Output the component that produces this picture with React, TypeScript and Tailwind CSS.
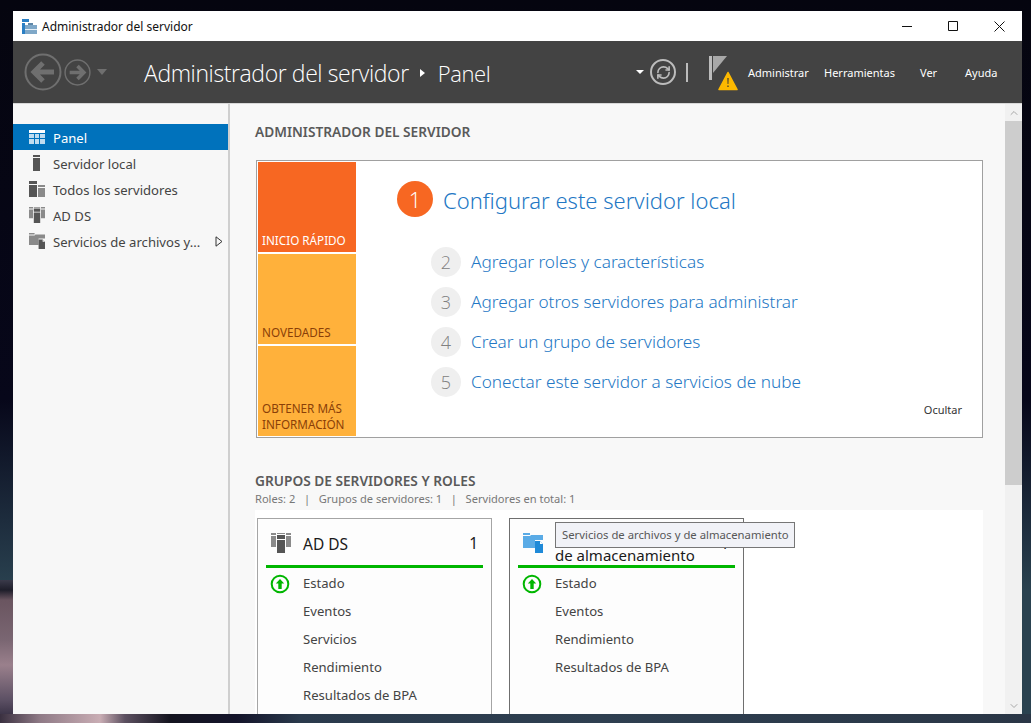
import { RefreshCw, ChevronUp, ChevronDown } from 'lucide-react';

const uiFont = "font-['Noto_Sans',sans-serif]";

function NavArrow({ size, flip }: { size: number; flip?: boolean }) {
  return (
    <svg width={size} height={size} viewBox="0 0 38 38" className={flip ? 'rotate-180' : ''}>
      <circle cx="19" cy="19" r="17.5" fill="none" stroke="#6f6f6f" strokeWidth="2" />
      <path d="M30 19H11M19 10l-9 9 9 9" fill="none" stroke="#6f6f6f" strokeWidth="5" />
    </svg>
  );
}

function PanelIcon() {
  return (
    <svg width="16" height="14" viewBox="0 0 16 14">
      <rect width="16" height="3" fill="#fff" />
      <path d="M0 4h5v4H0zM6 4h4v4H6zM11 4h5v4h-5zM0 9h5v5H0zM6 9h4v5H6zM11 9h5v5h-5z" fill="#bfdcf0" />
    </svg>
  );
}

function LocalIcon() {
  return (
    <svg width="16" height="16" viewBox="0 0 16 16">
      <path d="M4 0h7v2H4zM4 3h7v13H4z" fill="#555" />
    </svg>
  );
}

function AllIcon() {
  return (
    <svg width="16" height="16" viewBox="0 0 16 16">
      <path d="M0 0h8v3H0zM0 4h8v12H0z" fill="#555" />
      <path d="M9 4h7v2H9zM9 7h7v9H9z" fill="#8a8a8a" />
    </svg>
  );
}

function AdIcon({ size = 16 }: { size?: number }) {
  return (
    <svg width={size} height={size} viewBox="0 0 20 20">
      <path d="M0 0h5v2H0zM0 3h5v11H0zM15 0h5v2h-5zM15 3h5v11h-5zM6 0h8v1H6z" fill="#8a8a8a" />
      <path d="M6 2h8v4H6zM6 7h8v13H6z" fill="#555" />
    </svg>
  );
}

function FilesIcon({ color = '#8a8a8a', dark = '#555', fold = '#f7f7f7', size = 16 }: { color?: string; dark?: string; fold?: string; size?: number }) {
  return (
    <svg width={size} height={size} viewBox="0 0 20 20">
      <path d="M0 0h7v2H0zM0 3h7l1-1h12v5H12v8H0z" fill={color} />
      <path d="M12 8h5l3 3v9h-8z" fill={dark} />
      <path d="M17 8v3h3z" fill={fold} />
    </svg>
  );
}

function UpStatus() {
  return (
    <svg width="20" height="20" viewBox="0 0 20 20">
      <circle cx="10" cy="10" r="8.3" fill="none" stroke="#00b600" strokeWidth="2" />
      <path d="M10 5l4.2 4.6H11.7V15H8.3V9.6H5.8z" fill="#00b600" />
    </svg>
  );
}

function Tile({ label, tone }: { label: string; tone: 'orange' | 'amber' }) {
  return (
    <div
      className={`w-[98px] h-[90px] flex items-end px-[4px] pb-[4px] text-[11.7px] leading-[16px] ${
        tone === 'orange' ? 'bg-[#f76722] text-white' : 'bg-[#ffb13b] text-[#8a3f08]'
      }`}
    >
      <span>{label}</span>
    </div>
  );
}

function Step({ n, label }: { n: number; label: string }) {
  return (
    <div className="flex items-center h-[30px] mb-[10px]">
      <div className="w-[30px] h-[30px] rounded-full bg-[#efefef] flex items-center justify-center text-[#808080] text-[18px] font-['Open_Sans',sans-serif] font-light mr-[10px]">
        {n}
      </div>
      <span className="text-[#2377c4] text-[17.2px] font-light whitespace-nowrap">{label}</span>
    </div>
  );
}

function RoleCard({ icon, title, count, countPad, items, hovered }: { icon: React.ReactNode; title: React.ReactNode; count: string; countPad: string; items: string[]; hovered?: boolean }) {
  return (
    <div className={`w-[235px] h-[210px] border bg-[#fdfdfd] px-[8px] shrink-0 ${hovered ? 'border-[#6f6f6f]' : 'border-[#a5a5a5]'}`}>
      <div className="flex items-center h-[49px] border-b-[3px] border-[#00b600]">
        <div className="w-[37px] pl-[5px] mt-[2px] flex">{icon}</div>
        <div className="text-[15px] leading-[20px] text-[#1a1a1a] flex-1 mt-[4px]">{title}</div>
        <div className={`text-[15.5px] text-[#1a1a1a] mt-[4px] ${countPad}`}>{count}</div>
      </div>
      <div className="pt-[2px]">
        {items.map((it, i) => (
          <div key={it} className="h-[28px] flex items-center text-[13.1px] text-[#444]">
            <div className="w-[37px] pl-[4px] flex">{i === 0 && <UpStatus />}</div>
            {it}
          </div>
        ))}
      </div>
    </div>
  );
}

export default function App() {
  const nav = [
    { label: 'Panel', icon: <PanelIcon /> },
    { label: 'Servidor local', icon: <LocalIcon /> },
    { label: 'Todos los servidores', icon: <AllIcon /> },
    { label: 'AD DS', icon: <AdIcon /> },
    { label: 'Servicios de archivos y...', icon: <FilesIcon />, more: true },
  ];

  return (
    <div className={`relative w-[1031px] h-[723px] overflow-hidden bg-[linear-gradient(to_bottom,#05050f_0,#07071a_400px,#1d2c3d_520px,#2a4250_590px)] pt-[11px] pl-[13px] ${uiFont}`}>
      {/* wallpaper peeking out around the window */}
      <div className="absolute left-0 top-[580px] w-[13px] h-[143px] bg-[linear-gradient(to_bottom,#3a3a4a_0,#1e1e2a_10px,#6a5560_20px,#7a6672_60px,#9a808c_85px,#5c5064_120px,#2a2438_143px)]" />
      <div className="absolute left-0 bottom-0 w-full h-[9px] bg-[linear-gradient(to_right,#3a3040_0,#8f7a86_40px,#c9adb4_100px,#5c5060_125px,#14141f_170px,#14142a_237px,#2a3a4c_300px,#2e3f50_600px,#2a3646_1031px)]" />

      <div className="w-[1009px] h-[703px] bg-white flex flex-col overflow-hidden relative">
        {/* title bar */}
        <div className="h-[30px] shrink-0 flex items-center pl-[9px] text-[12px] text-[#111]">
          <svg width="15" height="15" viewBox="0 0 15 15" className="mr-[5px]">
            <path d="M0 0h7v3H0zM0 4h3v11H0z" fill="#2a7fc4" />
            <path d="M3 6h12v9H3z" fill="#7fa8c8" />
            <path d="M6 4h5v2H6z" fill="#5e87a8" />
            <path d="M3 10h12v1H3z" fill="#e4eef6" />
          </svg>
          <span className="pt-[1px]">Administrador del servidor</span>
          <div className="ml-auto flex items-center h-full">
            <div className="w-[46px] flex justify-center">
              <svg width="10" height="10" viewBox="0 0 10 10"><path d="M0 5.5h10" stroke="#111" /></svg>
            </div>
            <div className="w-[46px] flex justify-center">
              <svg width="10" height="10" viewBox="0 0 10 10"><path d="M.5.5h9v9h-9z" fill="none" stroke="#111" /></svg>
            </div>
            <div className="w-[46px] flex justify-center">
              <svg width="11" height="11" viewBox="0 0 11 11"><path d="M.5.5l10 10M10.5.5l-10 10" stroke="#111" /></svg>
            </div>
          </div>
        </div>

        {/* header */}
        <div className="h-[62px] shrink-0 bg-[#434343] flex items-center text-white">
          <div className="pl-[11px] flex items-center">
            <NavArrow size={38} />
            <div className="ml-[2px]"><NavArrow size={27} flip /></div>
            <div className="ml-[6px] w-0 h-0 border-x-[5px] border-x-transparent border-t-[6px] border-t-[#6f6f6f]" />
          </div>
          <div className="ml-[37px] pt-[2px] flex items-center text-[23px] font-light font-['Open_Sans',sans-serif] tracking-[-0.4px] whitespace-nowrap">
            <span>Administrador del servidor</span>
            <span className="ml-[11px] mr-[13px] w-0 h-0 border-y-[4px] border-y-transparent border-l-[5px] border-l-white" />
            <span className="text-[22px]">Panel</span>
          </div>
          <div className="ml-auto flex items-center">
            <div className="w-0 h-0 border-x-[4px] border-x-transparent border-t-[4px] border-t-white mr-[6px]" />
            <div className="w-[26px] h-[26px] rounded-full border-2 border-[#bcbcbc] flex items-center justify-center">
              <RefreshCw size={15} color="#bcbcbc" strokeWidth={2.6} />
            </div>
            <div className="w-[2px] h-[19px] bg-[#bcbcbc] ml-[10px] mr-[21px]" />
            <div className="w-[30px] h-[36px] mt-[4px]">
              <svg width="30" height="36" viewBox="0 0 30 36">
                <path d="M0 0h3v24H0z" fill="#bcbcbc" />
                <path d="M4 0h14L4 17z" fill="#a8a8a8" />
                <path d="M19 16.5l9 17H10z" fill="#fdb900" stroke="#fdb900" strokeWidth="1.6" strokeLinejoin="round" />
                <path d="M18.4 22h1.2l-.2 6h-.8zM18.4 29.4h1.2v1.6h-1.2z" fill="#333" />
              </svg>
            </div>
            <div className="flex items-center text-[11px] ml-[9px] mr-[23px] pt-[2px] whitespace-nowrap">
              <span className="w-[76px]">Administrar</span>
              <span className="w-[96px]">Herramientas</span>
              <span className="w-[45px]">Ver</span>
              <span className="w-[34px]">Ayuda</span>
            </div>
          </div>
        </div>

        {/* body */}
        <div className="flex-1 flex min-h-0 border-t border-[#d8d8d8]">
          <div className="w-[215px] shrink-0 bg-[#f7f7f7] pt-[20px]">
            {nav.map((n, i) => (
              <div key={n.label} className={`h-[26px] flex items-center text-[13.1px] pl-[16px] pr-[4px] ${i === 0 ? 'bg-[#0072bc] text-white' : 'text-[#444]'}`}>
                <div className="w-[24px] flex">{n.icon}</div>
                <span className="whitespace-nowrap pt-[3px]">{n.label}</span>
                {n.more && (
                  <svg width="8" height="11" viewBox="0 0 8 11" className="ml-auto mr-[1px]">
                    <path d="M1 .8v9.4L7 5.5z" fill="#f7f7f7" stroke="#333" />
                  </svg>
                )}
              </div>
            ))}
          </div>
          <div className="w-[2px] shrink-0 bg-[#cfcfcf]" />
          <div className="flex-1 min-w-0 bg-[#f8f8f8] pl-[25px] overflow-hidden">
            <div className="h-[56px] pt-[19px] text-[13.7px] leading-[18px] font-semibold text-[#5a5a5a]">ADMINISTRADOR DEL SERVIDOR</div>
            <div className="ml-[1px] w-[727px] h-[278px] border border-[#a0a0a0] bg-white flex p-[1px]">
              <div className="flex flex-col gap-[2px] w-[98px] shrink-0">
                <Tile label="INICIO RÁPIDO" tone="orange" />
                <Tile label="NOVEDADES" tone="amber" />
                <Tile label="OBTENER MÁS INFORMACIÓN" tone="amber" />
              </div>
              <div className="flex-1 pl-[41px] pt-[19px] relative">
                <div className="flex items-center h-[36px] mb-[30px]">
                  <div className="w-[36px] h-[36px] rounded-full bg-[#f76722] text-white text-[22px] font-light font-['Open_Sans',sans-serif] flex items-center justify-center mr-[10px]">1</div>
                  <span className="text-[#2377c4] text-[22px] font-light whitespace-nowrap pt-[2px]">Configurar este servidor local</span>
                </div>
                <div className="pl-[34px]">
                  <Step n={2} label="Agregar roles y características" />
                  <Step n={3} label="Agregar otros servidores para administrar" />
                  <Step n={4} label="Crear un grupo de servidores" />
                  <Step n={5} label="Conectar este servidor a servicios de nube" />
                </div>
                <div className="absolute right-[19px] bottom-[18px] text-[11px] text-[#333]">Ocultar</div>
              </div>
            </div>
            <div className="pt-[34px] h-[72px]">
              <div className="text-[13.7px] leading-[18px] font-semibold text-[#5a5a5a]">GRUPOS DE SERVIDORES Y ROLES</div>
              <div className="text-[11.1px] leading-[18px] text-[#777] whitespace-nowrap">
                Roles: 2 &nbsp; | &nbsp; Grupos de servidores: 1 &nbsp; | &nbsp; Servidores en total: 1
              </div>
            </div>
            <div className="w-[728px] h-[220px] bg-white flex gap-[17px] pl-[2px] pt-[8px]">
              <RoleCard
                icon={<AdIcon size={20} />}
                title={<span className="text-[15.5px]">AD DS</span>}
                count="1"
                countPad="pr-[5px]"
                items={['Estado', 'Eventos', 'Servicios', 'Rendimiento', 'Resultados de BPA']}
              />
              <RoleCard
                hovered
                icon={<FilesIcon color="#5aabe6" dark="#1f8ad8" fold="#fdfdfd" size={20} />}
                title={<div className="pt-[22px]">de almacenamiento</div>}
                count="1"
                countPad="pr-[6px]"
                items={['Estado', 'Eventos', 'Rendimiento', 'Resultados de BPA']}
              />
            </div>
          </div>
          <div className="w-[17px] shrink-0 bg-[#f1f1f1] flex flex-col items-center">
            <div className="h-[17px] flex items-center"><ChevronUp size={12} color="#a8a8a8" /></div>
            <div className="w-full h-[364px] bg-[#cdcdcd]" />
            <div className="mt-auto h-[17px] flex items-center"><ChevronDown size={12} color="#a8a8a8" /></div>
          </div>
        </div>

        {/* tooltip over the second card */}
        <div className="absolute left-[542px] top-[511px] h-[26px] w-[240px] pl-[6px] flex items-center border border-[#767676] bg-[#f1f2f7] text-[11.3px] text-[#575757] whitespace-nowrap">
          Servicios de archivos y de almacenamiento
        </div>
      </div>
    </div>
  );
}
